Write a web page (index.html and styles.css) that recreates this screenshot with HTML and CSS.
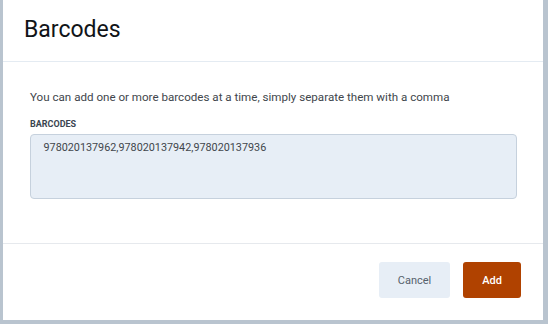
FILE: index.html
```html
<!DOCTYPE html>
<html lang="en">
<head>
<meta charset="utf-8">
<title>Barcodes</title>
<link rel="stylesheet" href="styles.css">
</head>
<body>
<div class="modal">
  <div class="modal-header">
    <h1 class="modal-title">Barcodes</h1>
  </div>
  <div class="modal-body">
    <p class="hint">You can add one or more barcodes at a time, simply separate them with a comma</p>
    <label class="field-label" for="barcodes">BARCODES</label>
    <textarea id="barcodes" class="field-input">978020137962,978020137942,978020137936</textarea>
  </div>
  <div class="modal-footer">
    <button class="btn btn-cancel">Cancel</button>
    <button class="btn btn-primary">Add</button>
  </div>
</div>
</body>
</html>
```
FILE: styles.css
```css
html, body {
  margin: 0;
  padding: 0;
}
body {
  background: #b9c4cf;
  width: 548px;
  height: 324px;
  overflow: hidden;
  font-family: Roboto, "Liberation Sans", sans-serif;
}
.modal {
  margin-left: 3px;
  width: 540px;
  height: 320px;
  background: #ffffff;
  display: flex;
  flex-direction: column;
}
.modal-header {
  padding: 17px 21px 18px;
  border-bottom: 1px solid #e4ebf2;
}
.modal-title {
  margin: 0;
  font-size: 23px;
  line-height: 26px;
  font-weight: 400;
  color: #111418;
}
.modal-body {
  padding: 26px 27px 44px;
  display: flex;
  flex-direction: column;
  border-bottom: 1px solid #e6e9ed;
}
.hint {
  margin: 0;
  font-size: 11.6px;
  line-height: 18px;
  color: #41464c;
}
.field-label {
  margin-top: 13px;
  font-size: 9px;
  line-height: 11px;
  font-weight: 700;
  color: #3b4550;
}
.field-input {
  margin-top: 4px;
  box-sizing: border-box;
  width: 487px;
  height: 65px;
  margin-left: -0.5px;
  padding: 4px 13px;
  border: 1px solid #c6d1dd;
  border-radius: 4px;
  background: #e7eef6;
  font-family: Roboto, "Liberation Sans", sans-serif;
  font-size: 10.8px;
  line-height: 18px;
  color: #41464c;
  resize: none;
  outline: none;
  overflow: hidden;
}
.modal-footer {
  padding: 18px 22px 22px;
  display: flex;
  justify-content: flex-end;
  gap: 13px;
}
.btn {
  height: 36px;
  border: none;
  border-radius: 3px;
  font-family: Roboto, "Liberation Sans", sans-serif;
  font-size: 11px;
  padding: 0;
}
.btn-cancel {
  width: 71px;
  background: #e7eef6;
  color: #56616c;
}
.btn-primary {
  width: 58px;
  background: #b04200;
  color: #ffffff;
  font-weight: 500;
}
```
